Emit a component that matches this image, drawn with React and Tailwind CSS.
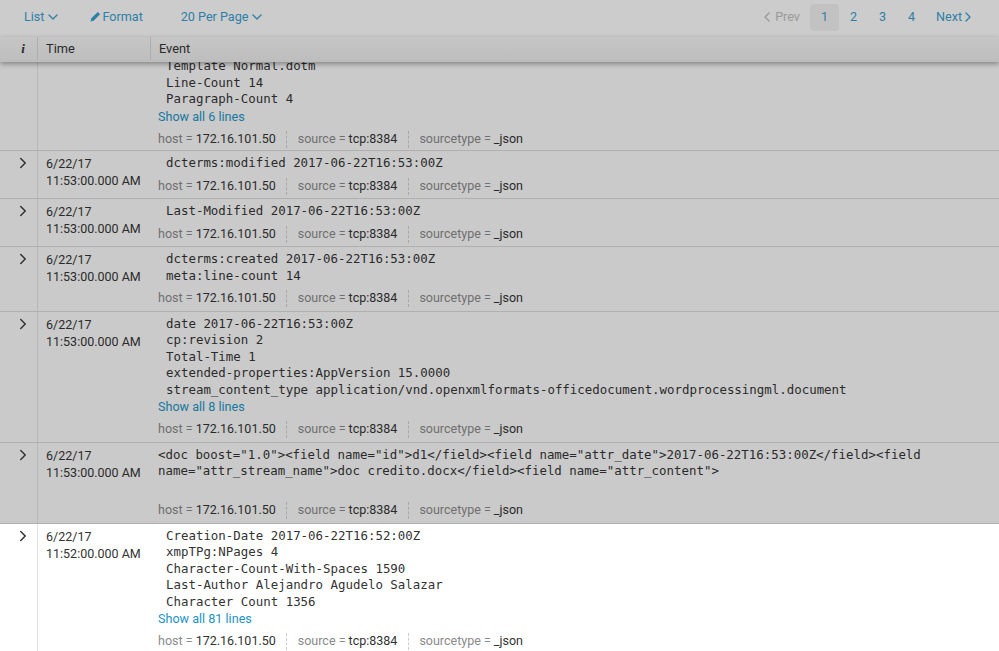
import React from 'react';
import { ChevronDown, ChevronLeft, ChevronRight } from 'lucide-react';

const rows = [
  {
    first: true,
    lines: ['Template Normal.dotm', 'Line-Count 14', 'Paragraph-Count 4'],
    more: 'Show all 6 lines',
  },
  { date: '6/22/17', time: '11:53:00.000 AM', lines: ['dcterms:modified 2017-06-22T16:53:00Z'] },
  { date: '6/22/17', time: '11:53:00.000 AM', lines: ['Last-Modified 2017-06-22T16:53:00Z'] },
  { date: '6/22/17', time: '11:53:00.000 AM', lines: ['dcterms:created 2017-06-22T16:53:00Z', 'meta:line-count 14'] },
  {
    date: '6/22/17',
    time: '11:53:00.000 AM',
    lines: [
      'date 2017-06-22T16:53:00Z',
      'cp:revision 2',
      'Total-Time 1',
      'extended-properties:AppVersion 15.0000',
      'stream_content_type application/vnd.openxmlformats-officedocument.wordprocessingml.document',
    ],
    more: 'Show all 8 lines',
  },
  {
    date: '6/22/17',
    time: '11:53:00.000 AM',
    raw: [
      '<doc boost="1.0"><field name="id">d1</field><field name="attr_date">2017-06-22T16:53:00Z</field><field',
      'name="attr_stream_name">doc credito.docx</field><field name="attr_content">',
      '\u00a0',
    ],
  },
  {
    light: true,
    date: '6/22/17',
    time: '11:52:00.000 AM',
    lines: [
      'Creation-Date 2017-06-22T16:52:00Z',
      'xmpTPg:NPages 4',
      'Character-Count-With-Spaces 1590',
      'Last-Author Alejandro Agudelo Salazar',
      'Character Count 1356',
    ],
    more: 'Show all 81 lines',
  },
];

const mono = "font-['DejaVu_Sans_Mono',monospace] text-[12.43px] leading-[16.5px] whitespace-pre";

const Meta = ({ light }) => {
  const key = light ? 'text-[#8a8a8a]' : 'text-[#6f6f6f]';
  const val = light ? 'text-[#333333]' : 'text-[#2a2a2a]';
  const sep = light ? 'border-[#cccccc]' : 'border-[#a8a8a8]';
  return (
    <div className="mt-[4.5px] flex h-5 items-center text-[12.5px]">
      <span className={key}>host = <span className={val}>172.16.101.50</span></span>
      <span className={`mx-[10.5px] h-[17px] border-l border-dashed ${sep}`} />
      <span className={key}>source = <span className={val}>tcp:8384</span></span>
      <span className={`mx-[10.5px] h-[17px] border-l border-dashed ${sep}`} />
      <span className={key}>sourcetype = <span className={val}>_json</span></span>
    </div>
  );
};

const Row = ({ row }) => {
  const { light, first } = row;
  return (
    <div
      className={`grid grid-cols-[38px_113px_1fr] ${
        light ? 'bg-white text-[#333333]' : 'border-b border-[#b0b0b0] bg-[#cacaca] text-[#2a2a2a]'
      } ${first ? '-mt-2' : ''}`}
    >
      <div className={`flex justify-center pl-[9px] pt-[3px] border-r ${light ? 'border-[#e1e1e1]' : 'border-[#b8b8b8]'}`}>
        {!first && <ChevronRight size={18} strokeWidth={2} className="text-[#333333]" />}
      </div>
      <div className="pl-2 pt-1 text-[12.5px] leading-[17px]">
        {!first && (
          <>
            <div>{row.date}</div>
            <div>{row.time}</div>
          </>
        )}
      </div>
      <div className={`pl-[7px] pt-1 ${first ? 'pb-px' : 'pb-[2px]'}`}>
        {row.lines && row.lines.map((line) => <div key={line} className={`${mono} pl-2`}>{line}</div>)}
        {row.raw && row.raw.map((line, i) => <div key={i} className={mono}>{line}</div>)}
        {row.more && (
          <div className={`text-[12.6px] leading-[17px] ${light ? 'text-[#1e93c6]' : 'text-[#1878a0]'}`}>{row.more}</div>
        )}
        <Meta light={light} />
      </div>
    </div>
  );
};

export default function App() {
  return (
    <div className="flex h-[651px] w-[999px] flex-col overflow-hidden bg-[#cacaca] font-['Roboto',sans-serif] text-[#2a2a2a]">
      {/* toolbar */}
      <div className="relative z-10 flex h-[37px] items-center justify-between bg-[#cccccc] pb-[3px] text-[12.6px] text-[#2f7fa8]">
        <div className="flex items-center">
          <span className="ml-6 flex items-center gap-px">List <ChevronDown size={16} strokeWidth={2} /></span>
          <span className="ml-[29px] flex items-center gap-px">
            <svg width="11" height="11" viewBox="0 0 12 12" fill="currentColor">
              <path d="M0.5 11.5 L1.5 8 L8.5 1 L11 3.5 L4 10.5 Z" />
            </svg>
            Format
          </span>
          <span className="ml-[38px] flex items-center gap-px">20 Per Page <ChevronDown size={16} strokeWidth={2} /></span>
        </div>
        <div className="mr-[23px] flex items-center">
          <span className="mr-[10px] flex items-center text-[#9a9a9a]"><ChevronLeft size={16} strokeWidth={2} />Prev</span>
          <span className="flex h-[27px] w-[29px] items-center justify-center rounded bg-[#c2c2c2]">1</span>
          <span className="flex h-[27px] w-[29px] items-center justify-center">2</span>
          <span className="flex h-[27px] w-[29px] items-center justify-center">3</span>
          <span className="flex h-[27px] w-[29px] items-center justify-center">4</span>
          <span className="ml-[10px] flex items-center">Next<ChevronRight size={16} strokeWidth={2} className="-ml-[2px]" /></span>
        </div>
      </div>

      {/* table header */}
      <div className="relative z-10 grid h-[25px] shrink-0 grid-cols-[38px_113px_1fr] items-stretch bg-gradient-to-b from-[#c6c6c6] to-[#bdbdbd] pb-[2px] text-[12.8px] shadow-[0_2px_5px_rgba(0,0,0,0.35)]">
        <div className="flex items-center justify-center border-r border-[#adadad] pl-[9px] font-['Liberation_Serif',serif] text-[13px] font-bold italic">i</div>
        <div className="flex items-center border-r border-[#adadad] pl-2">Time</div>
        <div className="flex items-center pl-2">Event</div>
      </div>

      <div className="min-h-0 flex-1 overflow-hidden">
        {rows.map((row, i) => <Row key={i} row={row} />)}
      </div>
    </div>
  );
}
